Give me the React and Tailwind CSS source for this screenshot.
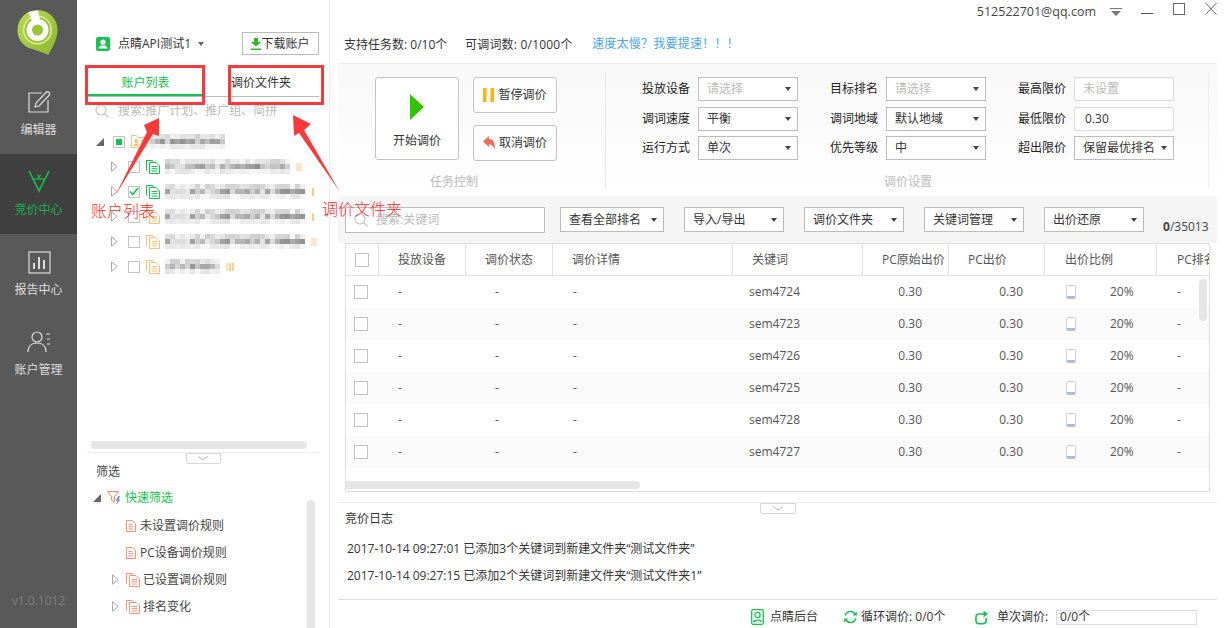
import React from "react";

const FONT = { fontFamily: '"Open Sans","Noto Sans CJK SC",sans-serif' };

function Logo() {
  return (
    <svg width="48" height="60" viewBox="0 0 48 60" className="mt-[6px]">
      <defs>
        <linearGradient id="lg" x1="0" y1="0" x2="1" y2="1">
          <stop offset="0" stopColor="#bcdc55" />
          <stop offset="1" stopColor="#8cb52e" />
        </linearGradient>
      </defs>
      <path d="M22.5 4A20 20 0 0 1 42.5 24C42.5 33 37 42 33.5 49C27 46 21 44 14 42C7 39 2.5 32 2.5 24A20 20 0 0 1 22.5 4Z" fill="url(#lg)" />
      <circle cx="22.5" cy="24" r="14.5" fill="#dcecA0" />
      <circle cx="22.5" cy="24" r="13" fill="#9dc23a" />
      <circle cx="22.5" cy="24" r="11" fill="#fff" />
      <circle cx="22.5" cy="24" r="5.5" fill="#9cc437" />
      <path d="M13 6L23 4.5L25 13L17 15Z" fill="#fff" />
    </svg>
  );
}

function NavIcon({ kind, color }) {
  const common = { width: 26, height: 24, viewBox: "0 0 26 24", fill: "none", stroke: color, strokeWidth: 1.2 };
  if (kind === "edit")
    return (
      <svg {...common}>
        <path d="M22 10V22H3V3H16" />
        <path d="M9 17L10 13L20 2.5C21 1.5 22 1.5 23 2.5C24 3.5 24 4.5 23 5.5L13 16Z" fill="#595959" />
      </svg>
    );
  if (kind === "bid")
    return (
      <svg {...common} stroke="#19b24b" strokeWidth="1.7">
        <path d="M3 1L7 9H19L23 1" />
        <path d="M7 9L13 21L19 9" />
        <path d="M11.5 4.5L13 8L14.5 4.5" strokeWidth="1.2" />
      </svg>
    );
  if (kind === "report")
    return (
      <svg {...common}>
        <rect x="3" y="2" width="21" height="21" />
        <path d="M8 19V13M13 19V7M18 19V10" strokeWidth="2" />
      </svg>
    );
  return (
    <svg {...common}>
      <circle cx="11" cy="7" r="5" />
      <path d="M2 22C2 16 6 13 11 13C16 13 20 16 20 22" />
      <path d="M20 4H24M21 9H24M21 14H24" strokeWidth="1" />
    </svg>
  );
}

function NavItem({ kind, label, active }) {
  return (
    <div className={`h-20 flex flex-col items-center pt-[16px] ${active ? "bg-[#404040] text-[#19b24b]" : "text-[#dddddd]"}`}>
      <div className="h-6 flex items-center justify-center">
        <NavIcon kind={kind} color="#dcdcdc" />
      </div>
      <div className="mt-[7px] text-xs leading-[18px]">{label}</div>
    </div>
  );
}

function TriOpen() {
  return (
    <svg width="8" height="8" viewBox="0 0 8 8" className="shrink-0">
      <path d="M0 8L8 0V8Z" fill="#666" />
    </svg>
  );
}
function TriClosed() {
  return (
    <svg width="7" height="11" viewBox="0 0 7 11" className="shrink-0">
      <path d="M.5 .8L6.2 5.5L.5 10.2Z" fill="#fff" stroke="#aaa" />
    </svg>
  );
}

function Check({ state }) {
  return (
    <span className="w-[12px] h-[12px] border border-[#c4c4c4] bg-white flex items-center justify-center shrink-0">
      {state === "partial" && <span className="w-[6px] h-[6px] bg-[#13c24f]" />}
      {state === "on" && (
        <svg width="10" height="9" viewBox="0 0 10 9">
          <path d="M1 4.5L3.8 7.5L9 1" fill="none" stroke="#13c24f" strokeWidth="1.6" />
        </svg>
      )}
    </span>
  );
}

function Docs({ color }) {
  return (
    <svg width="14" height="14" viewBox="0 0 14 14" fill="none" stroke={color} className="shrink-0">
      <path d="M.5 10.5V.5H6.5L7.5 2.5" />
      <path d="M3.5 2.5H10L13.5 6V13.5H3.5Z" fill="#fff" />
      <path d="M5.5 6.5H11.5M5.5 8.7H11.5M5.5 11H11.5" />
    </svg>
  );
}
function FolderUser() {
  return (
    <svg width="15" height="13" viewBox="0 0 15 13" fill="none" stroke="#f5c27a" className="shrink-0">
      <path d="M.5 12.5V.5H5.5L7 2.5H14.5V12.5Z" fill="#fff" />
      <circle cx="5.2" cy="6" r="1.6" fill="#f5c27a" />
      <path d="M2.5 10.5C3 8.5 7.5 8.5 8 10.5ZM9.5 5.5H13M9.5 8H13" fill="#f5c27a" />
    </svg>
  );
}
function Doc({ color }) {
  return (
    <svg width="10" height="12" viewBox="0 0 10 12" fill="none" stroke={color} className="shrink-0">
      <path d="M.5 .5H6.5L9.5 3.5V11.5H.5Z" fill="#fff" />
      <path d="M2.5 4.5H6M2.5 6.7H7.5M2.5 9H7.5" />
    </svg>
  );
}

function Mosaic({ width, seed }) {
  const cols = Math.floor(width / 5);
  const cells = [];
  const bases = [206, 140, 226];
  const spreads = [40, 95, 24];
  for (let r = 0; r < 3; r++) {
    for (let c = 0; c < cols; c++) {
      const x = Math.sin((c + 1) * 12.9898 + seed * 78.233 + r * 3.1) * 43758.5453;
      const v = x - Math.floor(x);
      const g = Math.min(248, bases[r] + Math.round(v * spreads[r]));
      cells.push(<span key={`${r}-${c}`} className="w-[5px] h-[5px]" style={{ background: `rgb(${g},${g},${g})` }} />);
    }
  }
  return (
    <div className="flex flex-wrap shrink-0 blur-[0.6px]" style={{ width: cols * 5 }}>
      {cells}
    </div>
  );
}

function TreeRow({ open, check, color, width, seed, indent, bars, first }) {
  return (
    <div className="h-[25px] flex items-center" style={{ paddingLeft: indent }}>
      <span className="w-[15px] flex">{open ? <TriOpen /> : <TriClosed />}</span>
      <span className="ml-[2px]">
        <Check state={check} />
      </span>
      <span className="ml-[6px]">{first ? <FolderUser /> : <Docs color={color} />}</span>
      <span className={first ? "ml-[4px]" : "ml-[5px]"}>
        <Mosaic width={width} seed={seed} />
      </span>
      {bars === "one" && <span className="ml-[7px] w-[2px] h-[8px] bg-[#f8cf8e]" />}
      {bars === "pale" && <span className="ml-[6px] w-[6px] h-[8px] bg-[#fbe6cb]" />}
      {bars === "three" && (
        <span className="ml-[6px] flex gap-[1px]">
          <span className="w-[2px] h-[8px] bg-[#fbe0b8]" />
          <span className="w-[2px] h-[8px] bg-[#f8cf8e]" />
          <span className="w-[2px] h-[8px] bg-[#f8cf8e]" />
        </span>
      )}
    </div>
  );
}

function FilterRow({ indent, tri, icon, text, gap }) {
  return (
    <div className="h-[27px] flex items-center text-xs text-[#444]" style={{ paddingLeft: indent }}>
      {tri && <span className="w-[14px] flex"><TriClosed /></span>}
      {icon}
      <span style={{ marginLeft: gap }}>{text}</span>
    </div>
  );
}

function Toggle({ w }) {
  return (
    <div className={`h-[11px] ${w} bg-white border border-[#d8d8d8] rounded-b-[2px] flex items-center justify-center`}>
      <svg width="12" height="5" viewBox="0 0 12 5">
        <path d="M1 .5L6 4L11 .5" fill="none" stroke="#bbb" />
      </svg>
    </div>
  );
}

function LeftPanel() {
  return (
    <div className="w-[253px] shrink-0 border-r border-[#eeeeee] flex flex-col h-full relative">
      <div className="h-[66px] pl-[19px] pr-[10px] flex items-start pt-[32px] justify-between">
        <div className="flex items-center h-[23px] text-xs text-[#333]">
          <svg width="14" height="14" viewBox="0 0 14 14">
            <rect width="14" height="14" rx="2" fill="#13c24f" />
            <circle cx="7" cy="5.2" r="2.6" fill="#fff" />
            <path d="M2.5 11.5C2.5 9 5 8.5 7 8.5C9 8.5 11.5 9 11.5 11.5Z" fill="#fff" />
          </svg>
          <span className="ml-[8px]">点睛API测试1</span>
          <span className="ml-[7px] w-0 h-0 border-x-[3px] border-x-transparent border-t-[4px] border-t-[#666]" />
        </div>
        <div className="w-[77px] h-[23px] border border-[#bbbbbb] flex items-center justify-center text-xs text-[#333]">
          <svg width="10" height="12" viewBox="0 0 10 12">
            <path d="M3 0H7V4H10L5 8.5L0 4H3Z M0 10.5H10V12H0Z" fill="#2db52d" />
          </svg>
          <span>下载账户</span>
        </div>
      </div>
      <div className="ml-[11px] mr-[10px] h-[31px] flex border-b border-[#bbbbbb] text-xs">
        <div className="w-[115px] h-[30px] border-b-2 border-[#13c24f] text-[#13c24f] flex items-center justify-center pt-[5px]">账户列表</div>
        <div className="flex-1 flex items-center pl-[28px] text-[#333] h-[30px] pt-[4px]">调价文件夹</div>
      </div>
      <div className="h-[31px] pl-[18px] pb-[4px] flex items-center text-xs text-[#bbbbbb]">
        <svg width="14" height="14" viewBox="0 0 14 14" fill="none" stroke="#c8c8c8" strokeWidth="1.2">
          <circle cx="6" cy="6" r="5" />
          <path d="M9.5 9.5L13.5 13.5" />
        </svg>
        <span className="ml-[9px]">搜索:推广计划、推广组、简拼</span>
      </div>
      <div className="pl-[19px] pt-[1px]">
        <TreeRow open first check="partial" color="#f5c27a" width={75} seed={1} indent={0} />
        <TreeRow check="none" color="#13c24f" width={125} seed={2} indent={15} bars="pale" />
        <TreeRow check="on" color="#13c24f" width={140} seed={3} indent={15} bars="one" />
        <TreeRow check="none" color="#f5c27a" width={140} seed={3} indent={15} bars="one" />
        <TreeRow check="none" color="#f5c27a" width={140} seed={3} indent={15} bars="pale" />
        <TreeRow check="none" color="#f5c27a" width={55} seed={6} indent={15} bars="three" />
      </div>
      <div className="flex-1" />
      <div className="ml-[14px] w-[216px] h-[8px] rounded bg-[#e6e6e6]" />
      <div className="mt-[3px] mx-[10px] border-t border-[#eeeeee] flex justify-center">
        <Toggle w="w-[35px]" />
      </div>
      <div className="h-[164px] relative overflow-hidden">
        <div className="pl-[19px] h-[22px] -mt-[3px] flex items-center text-xs text-[#444]">筛选</div>
        <div className="h-[28px] mt-[1px] pl-[16px] flex items-center text-xs text-[#13c24f]">
          <TriOpen />
          <svg width="15" height="14" viewBox="0 0 15 14" className="ml-[6px]">
            <path d="M.5 .5H11.5L7.5 5.5V11L4.5 9V5.5Z" fill="#fff" stroke="#f2856a" />
            <path d="M11.5 5L8.5 9.5H10.5L9 13.5L13.5 8.5H11.5L13 5Z" fill="#5b8fe6" />
          </svg>
          <span className="ml-[3px]">快速筛选</span>
        </div>
        <FilterRow indent={49} icon={<Doc color="#f2937a" />} text="未设置调价规则" gap={4} />
        <FilterRow indent={49} icon={<Doc color="#f2937a" />} text="PC设备调价规则" gap={4} />
        <FilterRow indent={35} tri icon={<Docs color="#f2937a" />} text="已设置调价规则" gap={3} />
        <FilterRow indent={35} tri icon={<Docs color="#f2937a" />} text="排名变化" gap={3} />
        <div className="absolute left-[230px] top-[36px] w-[8px] h-[133px] rounded bg-[#e6e6e6]" />
      </div>
    </div>
  );
}

function Select({ value, placeholder, w = "w-[100px]", pad = "pl-[8px]", className = "" }) {
  return (
    <div className={`${w} h-6 border border-[#bdbdbd] bg-white flex items-center justify-between ${pad} pr-[6px] text-xs ${placeholder ? "text-[#bbbbbb]" : "text-[#333]"} ${className}`}>
      <span>{value}</span>
      <span className="w-0 h-0 border-x-[3px] border-x-transparent border-t-[4px] border-t-[#444]" />
    </div>
  );
}

function FormRow({ label, children, className = "" }) {
  return (
    <div className={`flex items-center h-6 ${className}`}>
      <span className="w-[48px] mr-[8px] text-xs text-[#222] whitespace-nowrap">{label}</span>
      {children}
    </div>
  );
}

function ControlPanel() {
  return (
    <div className="h-[133px] border-t border-[#eeeeee] bg-gradient-to-b from-[#f8f8f8] to-white flex">
      <div className="w-[268px] mt-[8px] mb-[8px] border-r border-[#e8e8e8] relative pl-[37px] pt-[5px]">
        <div className="flex gap-[14px]">
          <div className="w-[84px] h-[83px] border border-[#c4c4c4] rounded-[3px] bg-white flex flex-col items-center pt-[16px] text-xs text-[#333]">
            <svg width="14" height="26" viewBox="0 0 14 26">
              <path d="M0 0L14 13L0 26Z" fill="#33c400" />
            </svg>
            <span className="mt-[13px]">开始调价</span>
          </div>
          <div className="flex flex-col gap-[12px]">
            <div className="w-[84px] h-[36px] border border-[#c4c4c4] rounded-[3px] bg-white flex items-center justify-center gap-[4px] text-xs text-[#333]">
              <svg width="11" height="14" viewBox="0 0 11 14">
                <path d="M0 0H3.5V14H0ZM7.5 0H11V14H7.5Z" fill="#fdb311" />
              </svg>
              暂停调价
            </div>
            <div className="w-[84px] h-[36px] border border-[#c4c4c4] rounded-[3px] bg-white flex items-center justify-center gap-[4px] text-xs text-[#333]">
              <svg width="12" height="14" viewBox="0 0 12 14">
                <path d="M0 5.5L6 0V3C10 3 12 6 12 14C10.5 10 9 8.5 6 8.5V11Z" fill="#f4695a" />
              </svg>
              取消调价
            </div>
          </div>
        </div>
        <div className="absolute left-[92px] bottom-[-2px] text-xs text-[#bbbbbb]">任务控制</div>
      </div>
      <div className="w-[603px] mt-[8px] mb-[8px] border-r border-[#eeeeee] relative flex pt-[5px] pl-[36px]">
        <div className="w-[188px]">
          <FormRow label="投放设备"><Select value="请选择" placeholder /></FormRow>
          <FormRow label="调词速度" className="mt-[6px]"><Select value="平衡" /></FormRow>
          <FormRow label="运行方式" className="mt-[5px]"><Select value="单次" /></FormRow>
        </div>
        <div className="w-[188px]">
          <FormRow label="目标排名"><Select value="请选择" placeholder /></FormRow>
          <FormRow label="调词地域" className="mt-[6px]"><Select value="默认地域" /></FormRow>
          <FormRow label="优先等级" className="mt-[5px]"><Select value="中" /></FormRow>
        </div>
        <div>
          <FormRow label="最高限价">
            <div className="w-[100px] h-6 border border-[#dddddd] bg-white flex items-center pl-[8px] text-xs text-[#bbbbbb]">未设置</div>
          </FormRow>
          <FormRow label="最低限价" className="mt-[6px]">
            <div className="w-[100px] h-6 border border-[#dddddd] bg-white flex items-center pl-[10px] text-xs text-[#333]">0.30</div>
          </FormRow>
          <FormRow label="超出限价" className="mt-[5px]">
            <Select value="保留最优排名" />
          </FormRow>
        </div>
        <div className="absolute left-[278px] bottom-[-2px] text-xs text-[#bbbbbb]">调价设置</div>
      </div>
    </div>
  );
}

function Toolbar() {
  return (
    <div className="h-[47px] bg-[#f5f5f5] flex items-start pl-[7px] pt-[11px] relative">
      <div className="w-[200px] h-[26px] border border-[#bdbdbd] bg-white flex items-center pl-[8px] text-xs text-[#bbbbbb]">
        <svg width="14" height="14" viewBox="0 0 14 14" fill="none" stroke="#c8c8c8" strokeWidth="1.2">
          <circle cx="6" cy="6" r="5" />
          <path d="M9.5 9.5L13.5 13.5" />
        </svg>
        <span className="ml-[8px]">搜索:关键词</span>
      </div>
      <Select value="查看全部排名" w="w-[104px]" className="ml-[15px] h-[25px]" />
      <Select value="导入/导出" className="ml-[20px] h-[25px]" />
      <Select value="调价文件夹" className="ml-[20px] h-[25px]" />
      <Select value="关键词管理" className="ml-[20px] h-[25px]" />
      <Select value="出价还原" className="ml-[20px] h-[25px]" />
      <span className="absolute left-[825px] top-[23px] text-xs text-[#444]">
        <b>0</b>/35013
      </span>
    </div>
  );
}

const HEAD_COLS = "grid grid-cols-[33px_87px_87px_180px_130px_86px_96px_112px_60px]";
const COLS = "grid grid-cols-[32px_87px_87px_180px_130px_86px_96px_112px_60px]";
const RED = ["sem4724", "sem4723", "sem4726", "sem4725", "sem4728", "sem4727"];

function Phone() {
  return (
    <svg width="10" height="14" viewBox="0 0 10 14">
      <rect x=".5" y=".5" width="9" height="13" rx="1" fill="#fff" stroke="#c9cfdc" />
      <rect x="1" y="11" width="8" height="2.5" fill="#a8bcd8" />
    </svg>
  );
}

function HeadCell({ children, pl, center }) {
  return (
    <div className={`h-[31px] border-r border-[#e2e2e2] flex items-center text-xs text-[#555] whitespace-nowrap overflow-hidden ${center ? "justify-center" : ""}`} style={pl ? { paddingLeft: pl } : undefined}>
      {children}
    </div>
  );
}

function Table() {
  return (
    <div className="ml-[7px] w-[865px] h-[249px] border border-[#dddddd] relative overflow-hidden">
      <div className={`${HEAD_COLS} border-b border-[#e2e2e2]`}>
        <HeadCell center>
          <span className="w-[14px] h-[14px] border border-[#c4c4c4] bg-white" />
        </HeadCell>
        <HeadCell center>投放设备</HeadCell>
        <HeadCell center>调价状态</HeadCell>
        <HeadCell pl={19}>调价详情</HeadCell>
        <HeadCell pl={19}>关键词</HeadCell>
        <HeadCell pl={19}>PC原始出价</HeadCell>
        <HeadCell pl={19}>PC出价</HeadCell>
        <HeadCell pl={20}>出价比例</HeadCell>
        <HeadCell pl={20}>PC排名</HeadCell>
      </div>
      {RED.map((k, i) => (
        <div key={k} className={`${COLS} h-[32px] items-center text-xs text-[#555] ${i % 2 ? "bg-[#fafafa]" : "bg-white"}`}>
          <div className="pl-[8px] flex">
            <span className="w-[14px] h-[14px] border border-[#c4c4c4] bg-white" />
          </div>
          <div className="pl-[20px]">-</div>
          <div className="pl-[30px]">-</div>
          <div className="pl-[21px]">-</div>
          <div className="pl-[17px]">{k}</div>
          <div className="pr-[26px] text-right">0.30</div>
          <div className="pr-[21px] text-right">0.30</div>
          <div className="pl-[22px] flex items-center">
            <Phone />
            <span className="ml-[34px]">20%</span>
          </div>
          <div className="pl-[21px]">-</div>
        </div>
      ))}
      <div className="absolute left-[-2px] bottom-[2px] w-[296px] h-[8px] rounded bg-[#e6e6e6]" />
      <div className="absolute left-[853px] top-[35px] w-[8px] h-[42px] rounded bg-[#e6e6e6]" />
    </div>
  );
}

function LogSection() {
  return (
    <div className="flex-1 flex flex-col">
      <div className="mt-[10px] border-t border-[#eeeeee] flex justify-center">
        <Toggle w="w-[36px]" />
      </div>
      <div className="h-[97px] border-b border-[#dddddd] text-xs text-[#333] -mt-[11px]">
        <div className="pl-[7px] pt-[6px] leading-[20px]">竞价日志</div>
        <div className="pl-[9px] mt-[11px] leading-[18px]">2017-10-14 09:27:01 已添加3个关键词到新建文件夹“测试文件夹”</div>
        <div className="pl-[9px] mt-[9px] leading-[18px]">2017-10-14 09:27:15 已添加2个关键词到新建文件夹“测试文件夹1”</div>
      </div>
      <div className="flex-1 flex items-center text-xs text-[#333] pl-[413px] pt-[6px]">
        <svg width="13" height="16" viewBox="0 0 13 16" fill="none" stroke="#13c24f" strokeWidth="1.3">
          <rect x=".7" y=".7" width="11.6" height="14.6" rx="1.5" />
          <circle cx="6.5" cy="6" r="2.6" />
          <path d="M2.5 13C3 10.5 10 10.5 10.5 13" />
        </svg>
        <span className="ml-[6px]">点睛后台</span>
        <svg width="13" height="14" viewBox="0 0 13 14" fill="none" stroke="#13c24f" strokeWidth="1.6" className="ml-[26px]">
          <path d="M1.2 5.5C2 3 4 1.5 6.5 1.5C8.5 1.5 10 2.5 11 4" />
          <path d="M11.8 8.5C11 11 9 12.5 6.5 12.5C4.5 12.5 3 11.5 2 10" />
          <path d="M12.8 1.5V5.5H8.8Z" fill="#13c24f" strokeWidth="0" />
          <path d="M.2 12.5V8.5H4.2Z" fill="#13c24f" strokeWidth="0" />
        </svg>
        <span className="ml-[4px] w-[89px]">循环调价: 0/0个</span>
        <svg width="13" height="15" viewBox="0 0 13 15" fill="none" stroke="#13c24f" strokeWidth="1.6" className="ml-[25px]">
          <path d="M9 4H4C2 4 1 5 1 7V10.5C1 12.5 2 13.7 4 13.7H8C10 13.7 11.2 12.5 11.2 10.5V8" />
          <path d="M8.5 .5L13 4L8.5 7.5Z" fill="#13c24f" strokeWidth="0" />
        </svg>
        <span className="ml-[9px] w-[56px] whitespace-nowrap">单次调价:</span>
        <div className="ml-[3px] w-[141px] h-[15px] border border-[#dddddd] pl-[3px] flex items-center">0/0个</div>
      </div>
    </div>
  );
}

function Annotations() {
  return (
    <>
      <div className="absolute left-[85px] top-[65px] w-[120px] h-[40px] border-[3px] border-[#f83a3a]" />
      <div className="absolute left-[228px] top-[65px] w-[96px] h-[40px] border-[3px] border-[#f83a3a]" />
      <svg className="absolute left-0 top-0" width="400" height="220" viewBox="0 0 400 220">
        <path d="M115 196L147 132L144 125L159 118L159 136L153 134Z" fill="#f83a3a" />
        <path d="M340 192L304 130L311 124L293 115L294 136L299 133Z" fill="#f83a3a" />
      </svg>
      <div className="absolute left-[91px] top-[200px] text-base leading-[22px] font-light text-[#f52a2a]">账户列表</div>
      <div className="absolute left-[322px] top-[198px] text-base leading-[22px] font-light text-[#f52a2a]">调价文件夹</div>
    </>
  );
}

export default function App() {
  return (
    <div className="w-[1225px] h-[628px] flex bg-white overflow-hidden relative" style={FONT}>
      <div className="w-[77px] shrink-0 h-full bg-[#595959] flex flex-col relative">
        <div className="h-[74px] flex justify-center">
          <Logo />
        </div>
        <NavItem kind="edit" label="编辑器" />
        <NavItem kind="bid" label="竞价中心" active />
        <NavItem kind="report" label="报告中心" />
        <NavItem kind="user" label="账户管理" />
        <div className="flex-1" />
        <div className="h-[40px] text-center text-xs text-[#7d7d7d] pt-[5px]">v1.0.1012</div>
      </div>
      <LeftPanel />
      <div className="flex-1 flex flex-col min-w-0 pl-[8px] pr-[8px]">
        <div className="h-[63px] relative shrink-0">
          <div className="h-[24px] flex items-center justify-end text-xs text-[#444]">
            <span className="mr-[14px] text-[12.5px]">512522701@qq.com</span>
            <svg width="12" height="8" viewBox="0 0 12 8" className="mr-[19px]">
              <path d="M0 0H12V1H0ZM1 3H11L6 8Z" fill="#777" />
            </svg>
            <svg width="12" height="24" viewBox="0 0 12 24" className="mr-[20px]">
              <path d="M0 13.5H12" stroke="#555" />
            </svg>
            <svg width="12" height="24" viewBox="0 0 12 24" className="mr-[20px]">
              <rect x=".5" y="3.5" width="11" height="11" fill="none" stroke="#666" />
            </svg>
            <svg width="12" height="24" viewBox="0 0 12 24">
              <path d="M.5 3L11.5 14.5M11.5 3L.5 14.5" fill="none" stroke="#666" />
            </svg>
          </div>
          <div className="absolute left-[6px] top-[37px] text-xs text-[#333] flex">
            <span className="w-[121px]">支持任务数: 0/10个</span>
            <span className="w-[127px] tracking-[0.2px]">可调词数: 0/1000个</span>
            <span className="text-[#4aa3f0] -mt-[1px] tracking-[0.25px]">速度太慢？我要提速！！！</span>
          </div>
        </div>
        <ControlPanel />
        <Toolbar />
        <Table />
        <LogSection />
      </div>
      <Annotations />
    </div>
  );
}
